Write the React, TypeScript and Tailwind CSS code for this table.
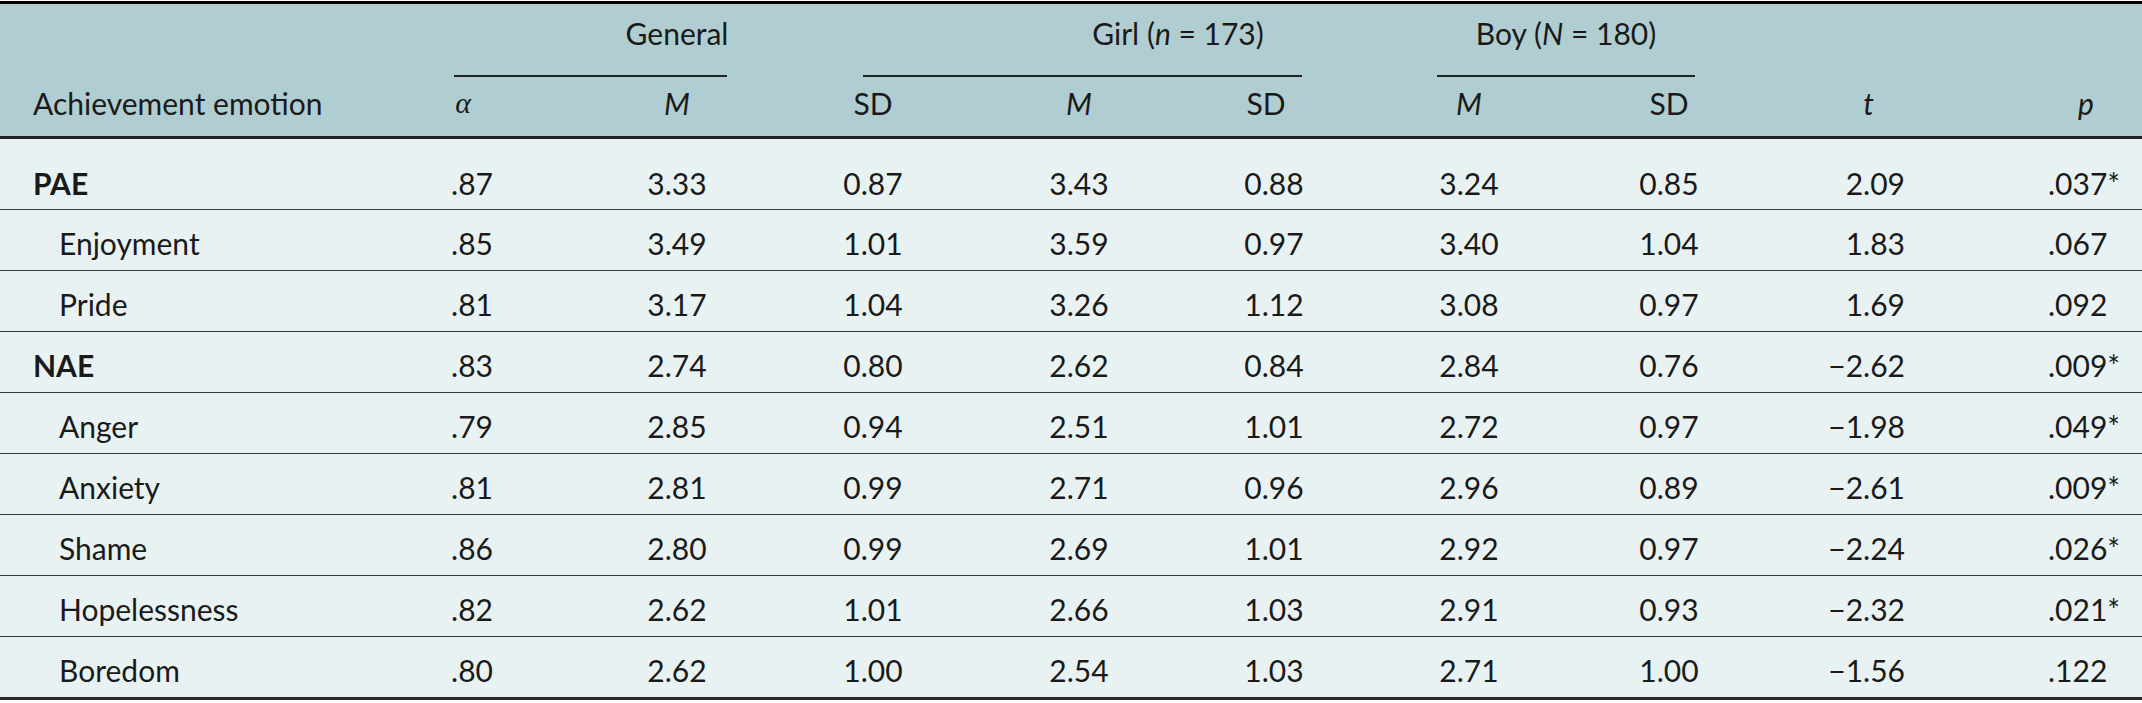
import React from "react";

type Row = { label: string; bold?: boolean; v: string[] };

const rows: Row[] = [
  { label: "PAE", bold: true, v: [".87", "3.33", "0.87", "3.43", "0.88", "3.24", "0.85", "2.09", ".037*"] },
  { label: "Enjoyment", v: [".85", "3.49", "1.01", "3.59", "0.97", "3.40", "1.04", "1.83", ".067"] },
  { label: "Pride", v: [".81", "3.17", "1.04", "3.26", "1.12", "3.08", "0.97", "1.69", ".092"] },
  { label: "NAE", bold: true, v: [".83", "2.74", "0.80", "2.62", "0.84", "2.84", "0.76", "\u22122.62", ".009*"] },
  { label: "Anger", v: [".79", "2.85", "0.94", "2.51", "1.01", "2.72", "0.97", "\u22121.98", ".049*"] },
  { label: "Anxiety", v: [".81", "2.81", "0.99", "2.71", "0.96", "2.96", "0.89", "\u22122.61", ".009*"] },
  { label: "Shame", v: [".86", "2.80", "0.99", "2.69", "1.01", "2.92", "0.97", "\u22122.24", ".026*"] },
  { label: "Hopelessness", v: [".82", "2.62", "1.01", "2.66", "1.03", "2.91", "0.93", "\u22122.32", ".021*"] },
  { label: "Boredom", v: [".80", "2.62", "1.00", "2.54", "1.03", "2.71", "1.00", "\u22121.56", ".122"] },
];

function Cells({ v }: { v: string[] }) {
  return (
    <>
      <div className="w-[196px] shrink-0 text-center">{v[0]}</div>
      <div className="w-[214px] shrink-0 text-center">{v[1]}</div>
      <div className="w-[208px] shrink-0 pr-[30px] text-center">{v[2]}</div>
      <div className="w-[174px] shrink-0 text-center">{v[3]}</div>
      <div className="w-[216px] shrink-0 text-center">{v[4]}</div>
      <div className="w-[174px] shrink-0 text-center">{v[5]}</div>
      <div className="w-[226px] shrink-0 text-center">{v[6]}</div>
      <div className="w-[143px] shrink-0 pr-[20px] text-right">{v[7]}</div>
      <div className="w-[217px] shrink-0 pl-[123px] text-left">{v[8]}</div>
    </>
  );
}

export default function App() {
  return (
    <div className="w-[2142px] bg-white pt-px font-['Lato',sans-serif] text-[30px] leading-[34px] text-[#1a1a1a]">
      <div className="border-t-[3px] border-black">
        <div className="bg-[#b0ced1]">
          <div className="flex h-[71px] items-start pt-[12px]">
            <div className="w-[462px] shrink-0" />
            <div className="w-[430px] shrink-0 text-center">General</div>
            <div className="w-[572px] shrink-0 text-center">
              Girl (<span className="italic">n</span> = 173)
            </div>
            <div className="w-[204px] shrink-0 text-center">
              Boy (<span className="italic">N</span> = 180)
            </div>
          </div>
          <div className="flex h-[2px]">
            <div className="w-[454px] shrink-0" />
            <div className="w-[273px] shrink-0 bg-[#222]" />
            <div className="w-[136px] shrink-0" />
            <div className="w-[439px] shrink-0 bg-[#222]" />
            <div className="w-[135px] shrink-0" />
            <div className="w-[258px] shrink-0 bg-[#222]" />
          </div>
          <div className="flex h-[59px] items-start pt-[9px]">
            <div className="w-[374px] shrink-0 pl-[33px]">Achievement emotion</div>
            <div className="w-[196px] shrink-0 pr-[18px] text-center font-['Liberation_Serif',serif] italic">α</div>
            <div className="w-[214px] shrink-0 text-center italic">M</div>
            <div className="w-[208px] shrink-0 pr-[30px] text-center">SD</div>
            <div className="w-[174px] shrink-0 text-center italic">M</div>
            <div className="w-[216px] shrink-0 pr-[16px] text-center">SD</div>
            <div className="w-[174px] shrink-0 text-center italic">M</div>
            <div className="w-[226px] shrink-0 text-center">SD</div>
            <div className="w-[143px] shrink-0 pr-[51px] text-right italic">t</div>
            <div className="w-[217px] shrink-0 pl-[153px] text-left italic">p</div>
          </div>
        </div>
        <div className="h-[3px] bg-[#222]" />
        <div className="bg-[#e9f2f2]">
          {rows.map((r, i) => (
            <div
              key={r.label}
              className={
                i === 0
                  ? "flex h-[70px] items-center pt-[18px]"
                  : "flex h-[61px] items-center border-t border-[#3a3a3a] pt-[6px]"
              }
            >
              <div
                className={
                  r.bold
                    ? "w-[374px] shrink-0 pl-[33px] font-bold"
                    : "w-[374px] shrink-0 pl-[59px]"
                }
              >
                {r.label}
              </div>
              <Cells v={r.v} />
            </div>
          ))}
        </div>
        <div className="h-[3px] bg-[#2a2a2a]" />
      </div>
    </div>
  );
}
